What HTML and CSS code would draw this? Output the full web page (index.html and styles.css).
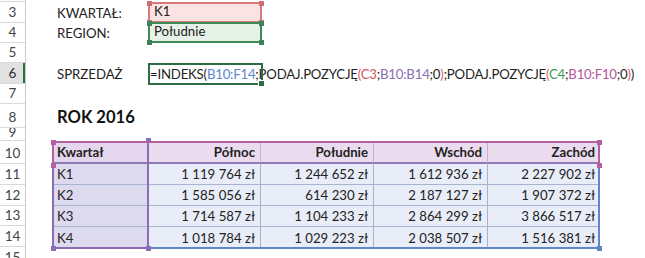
FILE: index.html
```html
<!DOCTYPE html>
<html lang="pl">
<head>
<meta charset="utf-8">
<link rel="stylesheet" href="styles.css">
</head>
<body>
<div class="sheet">
  <div class="rowheads">
    <div class="rh h2"></div>
    <div class="rh h3">3</div>
    <div class="rh h4">4</div>
    <div class="rh h5">5</div>
    <div class="rh h6 active">6</div>
    <div class="rh h7">7</div>
    <div class="rh h8">8</div>
    <div class="rh h9">9</div>
    <div class="rh h10">10</div>
    <div class="rh h11">11</div>
    <div class="rh h12">12</div>
    <div class="rh h13">13</div>
    <div class="rh h14">14</div>
    <div class="rh h15">15</div>
  </div>
  <div class="content">
    <div class="row h2"></div>
    <div class="row h3">
      <div class="cell label">KWARTAŁ:</div>
      <div class="cell ref ref-red">K1<i class="hd tl"></i><i class="hd tr"></i><i class="hd bl"></i><i class="hd br"></i></div>
    </div>
    <div class="row h4">
      <div class="cell label">REGION:</div>
      <div class="cell ref ref-green">Południe<i class="hd tl"></i><i class="hd tr"></i><i class="hd bl"></i><i class="hd br"></i></div>
    </div>
    <div class="row h5"></div>
    <div class="row h6">
      <div class="cell label">SPRZEDAŻ</div>
      <div class="cell formula"><span class="ftext">=INDEKS(<span class="c-blue">B10:F14</span>;PODAJ.POZYCJĘ<span class="c-par">(</span><span class="c-red">C3</span>;<span class="c-purple">B10:B14</span>;0<span class="c-par">)</span>;PODAJ.POZYCJĘ<span class="c-par">(</span><span class="c-green">C4</span>;<span class="c-pink">B10:F10</span>;0<span class="c-par">)</span>)</span><span class="activebox"><i class="fill-handle"></i></span></div>
    </div>
    <div class="row h7"></div>
    <div class="row h8">
      <div class="cell title">ROK 2016</div>
    </div>
    <div class="row h9"></div>
    <div class="table">
      <div class="trow thead">
        <div class="tc first">Kwartał</div>
        <div class="tc num">Północ</div>
        <div class="tc num">Południe</div>
        <div class="tc num">Wschód</div>
        <div class="tc num">Zachód</div>
      </div>
      <div class="trow h11">
        <div class="tc first">K1</div>
        <div class="tc num">1 119 764 zł</div>
        <div class="tc num">1 244 652 zł</div>
        <div class="tc num">1 612 936 zł</div>
        <div class="tc num">2 227 902 zł</div>
      </div>
      <div class="trow h12">
        <div class="tc first">K2</div>
        <div class="tc num">1 585 056 zł</div>
        <div class="tc num">614 230 zł</div>
        <div class="tc num">2 187 127 zł</div>
        <div class="tc num">1 907 372 zł</div>
      </div>
      <div class="trow h13">
        <div class="tc first">K3</div>
        <div class="tc num">1 714 587 zł</div>
        <div class="tc num">1 104 233 zł</div>
        <div class="tc num">2 864 299 zł</div>
        <div class="tc num">3 866 517 zł</div>
      </div>
      <div class="trow h14 last">
        <div class="tc first">K4</div>
        <div class="tc num">1 018 784 zł</div>
        <div class="tc num">1 029 223 zł</div>
        <div class="tc num">2 038 507 zł</div>
        <div class="tc num">1 516 381 zł</div>
      </div>
      <div class="range range-blue"><i class="hd br"></i></div>
      <div class="range range-purple"><i class="hd tr"></i><i class="hd bl"></i><i class="hd br"></i></div>
      <div class="range range-pink"><i class="hd tl"></i><i class="hd tr"></i><i class="hd bl"></i><i class="hd br"></i></div>
    </div>
  </div>
</div>
</body>
</html>
```

FILE: styles.css
```css
* { box-sizing: border-box; }
html, body { margin: 0; padding: 0; background: #fff; }
body {
  font-family: Lato, "Open Sans", sans-serif;
  font-size: 13.2px;
  color: #1f1f1f;
  width: 645px;
  height: 258px;
  overflow: hidden;
}
.sheet { display: flex; height: 258px; overflow: hidden; }

.rowheads {
  width: 26px;
  flex: none;
  border-right: 1px solid #c8c8c8;
  display: flex;
  flex-direction: column;
}
.rh {
  flex: none;
  border-bottom: 1px solid #d9d9d9;
  color: #444;
  font-size: 13.5px;
  display: flex;
  justify-content: center;
  align-items: flex-end;
  padding-bottom: 1px;
  overflow: hidden;
  line-height: 17px;
}
.rh.active {
  background: #e1e1e1;
  box-shadow: inset -2px 0 0 #217346;
  color: #2a2a2a;
}

.h2 { height: 2px; }
.h3 { height: 21px; }
.h4 { height: 20px; }
.h5 { height: 20px; }
.h6 { height: 21px; }
.h7 { height: 20px; }
.h8 { height: 24px; }
.h9 { height: 13px; }
.h10 { height: 23px; }
.h11 { height: 21px; }
.h12 { height: 21px; }
.h13 { height: 20px; }
.h14 { height: 21px; }
.h15 { height: 20px; }
.rh.h2 { padding: 0; }
.rh.h9 { line-height: 15px; padding: 0; }
.rh.h15 { border-bottom: none; }

.content { flex: 1; padding-left: 26px; }
.row { display: flex; position: relative; }
.cell { display: flex; align-items: flex-end; padding-bottom: 1px; line-height: 18px; white-space: nowrap; }
.label { width: 96px; padding-left: 5px; color: #222; }
.ref { width: 114px; padding-left: 4px; position: relative; border: 2px solid; }
.ref-red { background: #fbe3e3; border-color: #d87a7c; color: #222; }
.ref-green { background: #e6f1e7; border-color: #3d8a58; color: #222; }
.ref-green { margin-top: -1px; }
.hd { position: absolute; width: 5px; height: 5px; display: block; }
.ref-red .hd { background: #d06d70; }
.ref-green .hd { background: #3a8455; }
.hd.tl { left: -3.5px; top: -3.5px; }
.hd.tr { right: -3.5px; top: -3.5px; }
.hd.bl { left: -3.5px; bottom: -3.5px; }
.hd.br { right: -3.5px; bottom: -3.5px; }

.formula { position: relative; padding-left: 2px; overflow: visible; }
.ftext { position: relative; letter-spacing: -0.2px; }
.activebox {
  position: absolute;
  left: 0; top: 0;
  width: 115px; height: 22px;
  border: 2px solid #2c6b44;
}
.fill-handle {
  position: absolute;
  right: -4px; bottom: -4px;
  width: 5px; height: 5px;
  background: #2c6b44;
  border: 1px solid #fff;
  box-sizing: content-box;
  display: block;
}
.c-blue { color: #5d87cd; }
.c-red { color: #d2595c; }
.c-purple { color: #8a6db5; }
.c-green { color: #3a9a57; }
.c-pink { color: #b2579e; }
.c-par { color: #df5e6e; }

.title { padding-left: 5px; font-weight: 700; font-size: 16.6px; color: #111; line-height: 22px; padding-bottom: 0; }

.table { position: relative; width: 548px; }
.trow { display: grid; grid-template-columns: 96px 113px 113px 114px 112px; height: 21px; }
.trow.thead { height: 23px; }
.trow.thead .tc { font-weight: 700; border-bottom: 2px solid #8e79b4; border-right-color: #c3b1cf; }
.tc {
  display: flex; align-items: flex-end; padding: 0 5px 1px 5px;
  white-space: nowrap; line-height: 18px;
  border-right: 1px solid #a7b3d0;
  border-bottom: 1px solid #a7b3d0;
  background: #e8edf8;
  color: #222;
}
.thead .tc { background: #eadcee; }
.tc.first { background: #dddaf0; }
.thead .tc.first { background: #e4d6ec; }
.tc.num { justify-content: flex-end; }
.trow .tc:last-child { border-right: none; }
.trow.last .tc { border-bottom: none; }

.range { position: absolute; }
.range-blue { left: 0; top: 0; right: 0; bottom: -1px; border: 2px solid #5f86c6; border-top: none; border-left: none; }
.range-blue .hd { background: #5f86c6; }
.range-purple { left: 0; top: 0; width: 97px; bottom: -1px; border: 2px solid #8a6db2; border-top: none; }
.range-purple .hd { background: #8a6db2; }
.range-pink { left: 0; top: 0; right: 0; height: 23px; border: 2px solid #b2609f; border-bottom: none; }
.range-pink .hd { background: #b2609f; }
```
